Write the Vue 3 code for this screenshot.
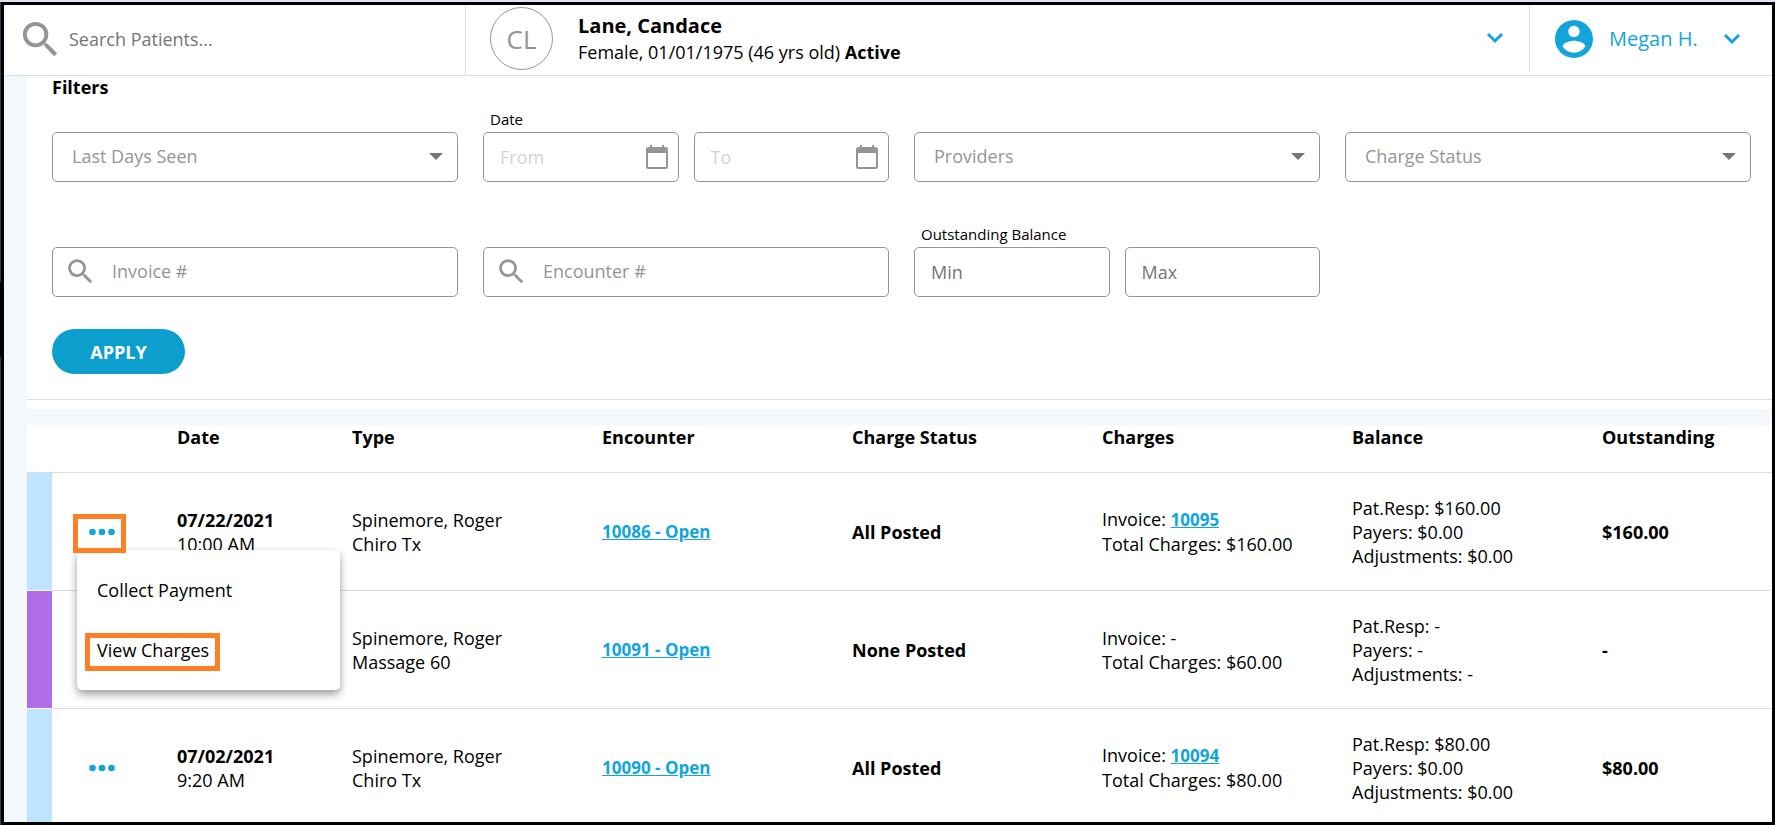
<script setup>
import { ref } from 'vue'

const openMenu = ref(0)

const rows = [
  {
    tone: 'sky', date: '07/22/2021', time: '10:00 AM', provider: 'Spinemore, Roger', type: 'Chiro Tx',
    encounter: '10086 - Open', status: 'All Posted', invoice: '10095', total: '$160.00',
    patient: '$160.00', payers: '$0.00', adjustments: '$0.00', outstanding: '$160.00',
  },
  {
    tone: 'violet', date: '', time: '', provider: 'Spinemore, Roger', type: 'Massage 60',
    encounter: '10091 - Open', status: 'None Posted', invoice: '', total: '$60.00',
    patient: '-', payers: '-', adjustments: '-', outstanding: '-',
  },
  {
    tone: 'sky', date: '07/02/2021', time: '9:20 AM', provider: 'Spinemore, Roger', type: 'Chiro Tx',
    encounter: '10090 - Open', status: 'All Posted', invoice: '10094', total: '$80.00',
    patient: '$80.00', payers: '$0.00', adjustments: '$0.00', outstanding: '$80.00',
  },
]
const searchPath = 'M15.5 14h-.79l-.28-.27A6.47 6.47 0 0 0 16 9.5 6.5 6.5 0 1 0 9.5 16c1.61 0 3.09-.59 4.23-1.57l.27.28v.79l5 4.99L20.49 19l-4.99-5zm-6 0A4.5 4.5 0 1 1 9.5 5a4.5 4.5 0 0 1 0 9z'
const calendarPath = 'M4 0h2v2h10V0h2v2h1.5a2.500 2.500 0 0 1 2.500 2.500v17a2.500 2.500 0 0 1-2.500 2.500h-17A2.500 2.500 0 0 1 0 21.500v-17A2.500 2.500 0 0 1 2.500 2H4zM2 8v14h18V8z'
</script>

<template>
  <div class="app">
    <div class="frame">
      <header class="topbar">
        <label class="search">
          <svg class="icon-search-lg" viewBox="0 0 24 24"><path :d="searchPath" /></svg>
          <input type="text" placeholder="Search Patients..." aria-label="Search Patients" />
        </label>
        <div class="patient">
          <span class="avatar">CL</span>
          <div class="who">
            <div class="name">Lane, Candace</div>
            <div class="info">Female, 01/01/1975 (46 yrs old) <b>Active</b></div>
          </div>
          <button class="toggle" aria-label="Patient details">
            <svg class="chevron" viewBox="0 0 18 12"><path d="M2 2l7 7 7-7" /></svg>
          </button>
        </div>
        <button class="user">
          <svg class="icon-user" viewBox="2 2 20 20"><path d="M12 2C6.48 2 2 6.48 2 12s4.48 10 10 10 10-4.48 10-10S17.52 2 12 2zm0 3c1.66 0 3 1.34 3 3s-1.34 3-3 3-3-1.34-3-3 1.34-3 3-3zm0 14.2a7.2 7.2 0 0 1-6-3.22c.03-1.99 4-3.08 6-3.08 1.99 0 5.97 1.09 6 3.08a7.2 7.2 0 0 1-6 3.22z" /></svg>
          <span>Megan H.</span>
          <svg class="chevron" viewBox="0 0 18 12"><path d="M2 2l7 7 7-7" /></svg>
        </button>
      </header>

      <main class="content">
        <section class="filters">
          <h2>Filters</h2>
          <form class="fields" @submit.prevent>
            <div class="field select">
              <select aria-label="Last Days Seen"><option>Last Days Seen</option></select>
              <svg class="caret" viewBox="0 0 14 7"><path d="M0 0h14L7 7z" /></svg>
            </div>
            <div class="field">
              <label for="date-from">Date</label>
              <div class="pair">
                <div class="dated">
                  <input id="date-from" class="faint" type="text" placeholder="From" />
                  <svg class="calendar" viewBox="0 0 22 24"><path :d="calendarPath" /></svg>
                </div>
                <div class="dated">
                  <input class="faint" type="text" placeholder="To" aria-label="Date to" />
                  <svg class="calendar" viewBox="0 0 22 24"><path :d="calendarPath" /></svg>
                </div>
              </div>
            </div>
            <div class="field select">
              <select aria-label="Providers"><option>Providers</option></select>
              <svg class="caret" viewBox="0 0 14 7"><path d="M0 0h14L7 7z" /></svg>
            </div>
            <div class="field select">
              <select aria-label="Charge Status"><option>Charge Status</option></select>
              <svg class="caret" viewBox="0 0 14 7"><path d="M0 0h14L7 7z" /></svg>
            </div>
            <div class="field lookup">
              <svg viewBox="0 0 24 24"><path :d="searchPath" /></svg>
              <input type="text" placeholder="Invoice #" aria-label="Invoice number" />
            </div>
            <div class="field lookup">
              <svg viewBox="0 0 24 24"><path :d="searchPath" /></svg>
              <input type="text" placeholder="Encounter #" aria-label="Encounter number" />
            </div>
            <div class="field">
              <label for="balance-min">Outstanding Balance</label>
              <div class="pair">
                <input id="balance-min" class="strong" type="text" placeholder="Min" />
                <input class="strong" type="text" placeholder="Max" aria-label="Outstanding balance max" />
              </div>
            </div>
          </form>
          <button class="apply">APPLY</button>
        </section>

        <table class="charges">
          <colgroup>
            <col class="c-tone" /><col class="c-menu" /><col class="c-date" />
            <col class="c-main" /><col class="c-main" /><col class="c-main" /><col class="c-main" /><col class="c-main" /><col />
          </colgroup>
          <thead>
            <tr>
              <th></th><th></th><th>Date</th><th>Type</th><th>Encounter</th><th>Charge Status</th>
              <th>Charges</th><th>Balance</th><th>Outstanding</th>
            </tr>
          </thead>
          <tbody>
            <tr v-for="(row, i) in rows" :key="row.encounter">
              <td :class="['tone', row.tone]"></td>
              <td class="actions">
                <button class="more" :aria-label="'Actions for ' + row.encounter" @click="openMenu = openMenu === i ? -1 : i">
                  <svg viewBox="0 0 26 8"><circle cx="3.5" cy="4" r="3.3" /><circle cx="13" cy="4" r="3.3" /><circle cx="22.5" cy="4" r="3.3" /></svg>
                </button>
                <template v-if="openMenu === i">
                  <div class="menu">
                    <button>Collect Payment</button>
                    <button class="marked">View Charges</button>
                  </div>
                  <span class="marker"></span>
                </template>
              </td>
              <td><b>{{ row.date }}</b><br />{{ row.time }}</td>
              <td>{{ row.provider }}<br />{{ row.type }}</td>
              <td><a href="#">{{ row.encounter }}</a></td>
              <td><b>{{ row.status }}</b></td>
              <td>Invoice: <a v-if="row.invoice" href="#">{{ row.invoice }}</a><template v-else>-</template><br />Total Charges: {{ row.total }}</td>
              <td>Pat.Resp: {{ row.patient }}<br />Payers: {{ row.payers }}<br />Adjustments: {{ row.adjustments }}</td>
              <td><b>{{ row.outstanding }}</b></td>
            </tr>
          </tbody>
        </table>
      </main>
    </div>
  </div>
</template>

<style>
body { margin: 0; }
</style>

<style scoped>
*, *::after { box-sizing: border-box; }
.app {
  height: 100vh;
  padding: 2px 0 0 1px;
  background: linear-gradient(#dfe3ec 2px, #2b3f5c 2px, #2b3f5c 282px, #000 282px, #000 357px, #2b3f5c 357px);
  font-family: "Open Sans", "Noto Sans", sans-serif;
  font-size: 18px;
  line-height: 24px;
  color: #000;
}
.frame {
  height: 100%;
  border: 3px solid #000;
  background: #f3f8fc;
  display: flex;
  flex-direction: column;
  overflow: hidden;
}
b { font-weight: 700; }
button, input, select { font: inherit; margin: 0; }
button { border: 0; background: none; padding: 0; cursor: pointer; color: inherit; }
a { color: #12a5dc; font-size: 17px; font-weight: 700; text-decoration: underline; }
svg { display: block; flex: none; }

.topbar {
  display: flex;
  flex: none;
  height: 71px;
  background: #fff;
  border-bottom: 1px solid #dcdcdc;
}
.search {
  flex: 0 0 461px;
  display: flex;
  align-items: center;
  padding: 0 0 2px 13px;
  gap: 5px;
}
.icon-search-lg { width: 47px; height: 47px; fill: #959595; }
.search input { border: 0; outline: 0; padding: 0; flex: 1; min-width: 0; background: none; }
.search input::placeholder { color: #757575; opacity: 1; }
.patient {
  flex: 1;
  display: flex;
  align-items: center;
  border-left: 1px solid #dcdcdc;
  padding: 0 25px 4px 24px;
}
.avatar {
  width: 63px;
  height: 63px;
  border: 1px solid #959595;
  border-radius: 50%;
  color: #959595;
  font-size: 26px;
  display: flex;
  align-items: center;
  justify-content: center;
  padding-top: 2px;
}
.who { margin-left: 25px; padding-top: 2px; flex: 1; line-height: 26px; }
.name { font-size: 20px; font-weight: 700; }
.chevron { width: 18px; height: 12px; fill: none; stroke: #12a5dc; stroke-width: 3; }
.user {
  width: 243px;
  height: 67px;
  border-left: 1px solid #dcdcdc;
  display: flex;
  align-items: center;
  padding-left: 25px;
  color: #12a5dc;
  font-size: 20px;
}
.icon-user { width: 38px; height: 38px; fill: #12a5dc; margin-right: 16px; }
.user .chevron { margin-left: 25px; }

.content { flex: 1; min-height: 0; overflow: hidden; padding-left: 23px; }
.filters {
  background: #fff;
  border-bottom: 1px solid #dcdcdc;
  box-shadow: 0 9px 0 #fff;
  padding: 0 21px 25px 25px;
}
h2 { margin: 0 0 12px; font-size: 18px; line-height: 22px; font-weight: 700; }
.fields {
  display: grid;
  grid-template-columns: repeat(4, minmax(0, 1fr));
  column-gap: 25px;
  row-gap: 43px;
  align-items: end;
}
.field { position: relative; }
.field label { display: block; font-size: 15px; line-height: 18px; margin: 0 0 4px 7px; }
.field input, .field select {
  display: block;
  width: 100%;
  height: 50px;
  border: 1px solid #959595;
  border-radius: 5px;
  background: #fff;
  padding: 0 16px;
  outline: 0;
}
.field select { appearance: none; color: #959595; padding: 0 40px 2px 19px; }
.field input::placeholder { color: #959595; opacity: 1; }
.field input.faint::placeholder { color: #d3d3d3; }
.field input.strong::placeholder { color: #757575; }
.pair { display: grid; grid-template-columns: 1fr 1fr; gap: 15px; }
.dated { position: relative; }
.calendar { position: absolute; right: 11px; top: 13px; width: 22px; height: 24px; fill: #959595; fill-rule: evenodd; pointer-events: none; }
.caret { position: absolute; right: 15px; top: 21px; width: 14px; height: 7px; fill: #757575; pointer-events: none; }
.field.lookup input { padding: 0 16px 2px 59px; }
.lookup svg { position: absolute; left: 12px; top: 8px; width: 33px; height: 33px; fill: #959595; }
.apply {
  display: block;
  margin-top: 32px;
  width: 133px;
  height: 45px;
  border-radius: 23px;
  background: #0c9fce;
  color: #fff;
  font-weight: 700;
}

.charges {
  width: 100%;
  table-layout: fixed;
  border-collapse: separate;
  border-spacing: 0;
  background: #fff;
  margin-top: 25px;
}
.c-tone { width: 25px; }
.c-menu { width: 125px; }
.c-date { width: 175px; }
.c-main { width: 250px; }
th { text-align: left; font-weight: 700; padding: 0 0 23px; border-bottom: 1px solid #dcdcdc; }
td { height: 118px; padding: 0; border-bottom: 1px solid #dcdcdc; vertical-align: middle; }
.tone { border-bottom-color: #fff; }
.sky { background: #bfe4ff; }
.violet { background: #af6ee8; }
.actions { position: relative; }
.more { display: block; padding: 12px 0 12px 37px; }
.more svg { width: 26px; height: 8px; fill: #12a5dc; }
.marker {
  position: absolute;
  z-index: 2;
  left: 21px;
  top: 41px;
  width: 53px;
  height: 39px;
  border: 5px solid #ff7f27;
  pointer-events: none;
}
.menu {
  position: absolute;
  z-index: 1;
  left: 25px;
  top: 77px;
  width: 263px;
  padding: 10px 0;
  background: #fff;
  border-radius: 5px;
  box-shadow: 0 4px 8px rgba(0, 0, 0, 0.4);
}
.menu button { position: relative; display: block; width: 100%; height: 60px; padding: 0 20px; text-align: left; }
.marked::after {
  content: "";
  position: absolute;
  left: 8px;
  top: 13px;
  width: 135px;
  height: 38px;
  border: 5px solid #ff7f27;
}
</style>
